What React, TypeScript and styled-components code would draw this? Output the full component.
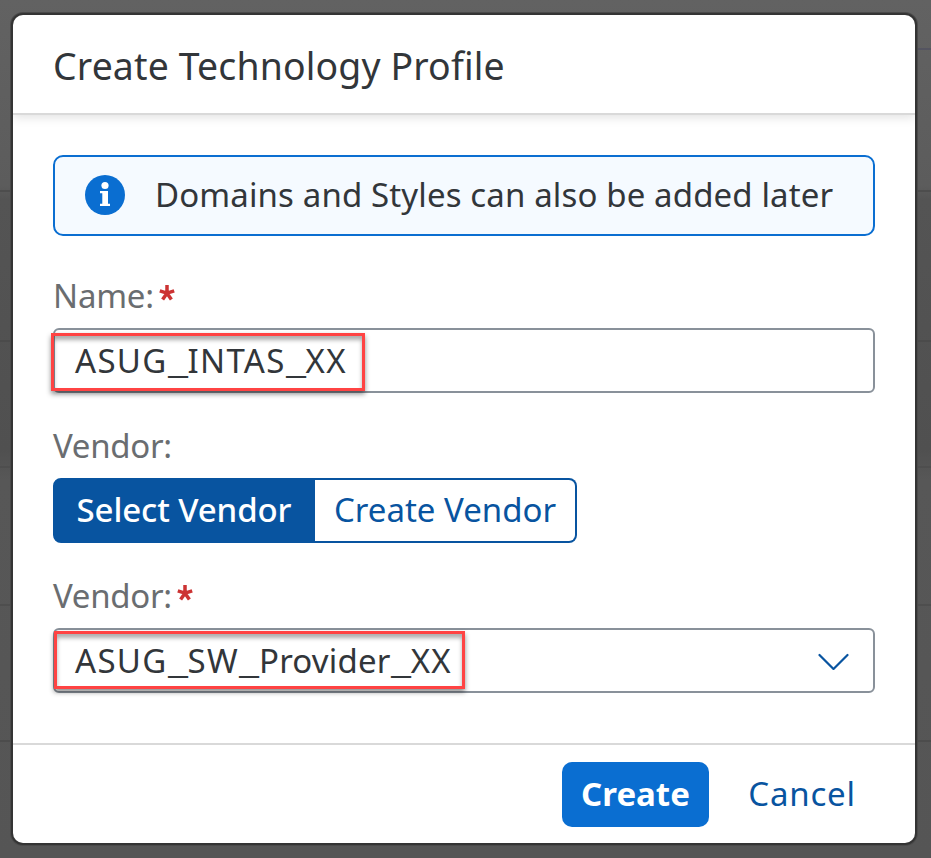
import React from 'react';
import styled, { createGlobalStyle } from 'styled-components';

const GlobalStyle = createGlobalStyle`
  * { box-sizing: border-box; }
  body { margin: 0; overflow: hidden; }
  button, input { font: inherit; margin: 0; }
`;

const Backdrop = styled.main`
  width: 931px;
  height: 858px;
  padding: 15px 16px 15px 13px;
  font-family: 'Noto Sans', sans-serif;
  font-size: 33px;
  line-height: 44px;
  color: #32363a;
  background:
    linear-gradient(#545460, #545460) 100% 48px / 16px 2px no-repeat,
    linear-gradient(#4d4d4d, #4d4d4d) 0 190px / 100% 2px no-repeat,
    linear-gradient(#4b4b4b, #4b4b4b) 0 340px / 100% 2px no-repeat,
    linear-gradient(#4e4e4e, #4e4e4e) 0 466px / 100% 2px no-repeat,
    linear-gradient(#4e4e4e, #4e4e4e) 0 604px / 100% 2px no-repeat,
    linear-gradient(#4c4c4c, #4c4c4c) 0 740px / 100% 2px no-repeat,
    linear-gradient(#626262 0, #5c5c5c 185px, #545454 200px, #505050 450px, #575757 480px, #555 858px);
`;

const Dialog = styled.section`
  display: flex;
  flex-direction: column;
  width: 902px;
  height: 828px;
  border-radius: 10px;
  overflow: hidden;
  background: #fff;
  box-shadow: 0 0 0 2px #343434, 0 0 0 3px #4a4a4a;
`;

const Header = styled.header`
  height: 100px;
  flex: none;
  padding: 27px 40px 0;
  border-bottom: 2px solid #d9d9d9;
  box-shadow: 0 2px 10px rgba(0, 0, 0, 0.13);
`;

const Title = styled.h1`
  margin: 0;
  font-size: 37.4px;
  line-height: 48px;
  font-weight: 400;
  letter-spacing: 0.15px;
  white-space: nowrap;
`;

const Content = styled.div`
  flex: 1;
  padding: 40px 40px 0;
`;

const MessageStrip = styled.div`
  display: flex;
  align-items: center;
  height: 81px;
  padding: 0 0 2px 30px;
  gap: 30px;
  border: 2px solid #0a6ed1;
  border-radius: 10px;
  background: #f5faff;
`;

const Text = styled.span<{ $spacing?: number }>`
  letter-spacing: ${(p) => p.$spacing ?? 0}px;
  white-space: nowrap;
`;

const Underscore = styled.span`
  display: inline-block;
  width: 20px;
  transform: scaleX(1.37);
  transform-origin: 0 50%;
`;

const Field = styled.div<{ $gap: number }>`
  margin-top: ${(p) => p.$gap}px;
`;

const Label = styled.label`
  display: flex;
  height: 54px;
  color: #6a6d70;
`;

const Required = styled.svg`
  width: 16px;
  height: 16px;
  margin: 11px 0 0 5px;
`;

const InputBox = styled.div`
  position: relative;
  display: flex;
  align-items: center;
  justify-content: space-between;
  height: 65px;
  padding: 0 23px 0 20px;
  border: 2px solid #89919a;
  border-radius: 6px;
  background: #fff;
`;

const Highlight = styled.div<{ $x: number; $y: number; $w: number }>`
  position: absolute;
  left: ${(p) => p.$x}px;
  top: ${(p) => p.$y}px;
  width: ${(p) => p.$w}px;
  height: 58px;
  border: 3px solid #ff4343;
  box-shadow: 0 3px 5px rgba(0, 0, 0, 0.45), inset 0 4px 4px rgba(0, 0, 0, 0.32);
`;

const Segments = styled.div`
  display: flex;
  width: 524px;
  height: 65px;
`;

const Segment = styled.button<{ $selected?: boolean }>`
  width: 262px;
  padding: 0 0 2px;
  border: 2px solid #0854a0;
  border-left-width: ${(p) => (p.$selected ? 2 : 0)}px;
  border-radius: ${(p) => (p.$selected ? '8px 0 0 8px' : '0 8px 8px 0')};
  background: ${(p) => (p.$selected ? '#0854a0' : '#fff')};
  color: ${(p) => (p.$selected ? '#fff' : '#0854a0')};
  font-weight: ${(p) => (p.$selected ? 500 : 400)};
`;

const Footer = styled.footer`
  display: flex;
  justify-content: flex-end;
  height: 100px;
  flex: none;
  padding: 17px 40px 0;
  gap: 20px;
  border-top: 2px solid #d9d9d9;
`;

const Action = styled.button<{ $primary?: boolean }>`
  width: ${(p) => (p.$primary ? 147 : 146)}px;
  height: 65px;
  padding: 0 0 2px;
  border: 0;
  border-radius: 10px;
  background: ${(p) => (p.$primary ? '#0a6ed1' : 'transparent')};
  color: ${(p) => (p.$primary ? '#fff' : '#0854a0')};
  font-weight: ${(p) => (p.$primary ? 700 : 400)};
`;

const InfoIcon = () => (
  <svg width="40" height="40" viewBox="0 0 40 40">
    <circle cx="20" cy="20" r="20" fill="#0a6ed1" />
    <circle cx="20" cy="10.5" r="3.6" fill="#fff" />
    <path d="M15 16h8v12.7h2V31H15v-2.3h2.3V18.3H15z" fill="#fff" />
  </svg>
);

const Asterisk = () => (
  <Required viewBox="0 0 16 16">
    <path d="M8 8.2V0M8 8.2L15.2 5.9M8 8.2L12.4 14.6M8 8.2L3.6 14.6M8 8.2L0.8 5.9" stroke="#cc3333" strokeWidth="3.5" fill="none" />
  </Required>
);

const Chevron = () => (
  <svg width="32" height="18" viewBox="0 0 32 18">
    <path d="M1.5 3l14 14L29.5 3" stroke="#0854a0" strokeWidth="2.2" strokeLinecap="round" strokeLinejoin="round" fill="none" />
  </svg>
);

// Identifiers are set with open capitals and wide underscores.
const Identifier = ({ value }: { value: string }) => (
  <Text>
    {value.split(/(_)/).map((part, i) =>
      part === '_' ? (
        <Underscore key={i}>_</Underscore>
      ) : (
        <Text key={i} $spacing={part === part.toUpperCase() ? 1.3 : 0.2}>{part}</Text>
      ),
    )}
  </Text>
);

export default function App() {
  return (
    <>
      <GlobalStyle />
      <Backdrop>
        <Dialog role="dialog">
          <Header>
            <Title>Create Technology Profile</Title>
          </Header>
          <Content>
            <MessageStrip>
              <InfoIcon />
              <Text $spacing={0.13}>Domains and Styles can also be added later</Text>
            </MessageStrip>
            <Field $gap={38}>
              <Label><Text $spacing={-0.2}>Name:</Text><Asterisk /></Label>
              <InputBox>
                <Identifier value="ASUG_INTAS_XX" />
                <Highlight $x={-4} $y={3} $w={314} />
              </InputBox>
            </Field>
            <Field $gap={31}>
              <Label><Text $spacing={-0.3}>Vendor:</Text></Label>
              <Segments>
                <Segment $selected><Text $spacing={-0.1}>Select Vendor</Text></Segment>
                <Segment><Text>Create Vendor</Text></Segment>
              </Segments>
            </Field>
            <Field $gap={31}>
              <Label><Text $spacing={-0.3}>Vendor:</Text><Asterisk /></Label>
              <InputBox>
                <Identifier value="ASUG_SW_Provider_XX" />
                <Chevron />
                <Highlight $x={-1} $y={1} $w={411} />
              </InputBox>
            </Field>
          </Content>
          <Footer>
            <Action $primary><Text>Create</Text></Action>
            <Action><Text $spacing={0.8}>Cancel</Text></Action>
          </Footer>
        </Dialog>
      </Backdrop>
    </>
  );
}
